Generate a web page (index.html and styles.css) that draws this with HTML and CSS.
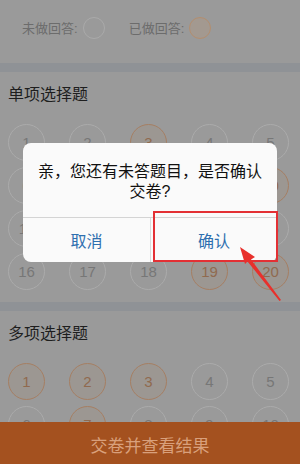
FILE: index.html
```html
<!DOCTYPE html>
<html lang="zh-CN">
<head>
<meta charset="utf-8">
<link rel="stylesheet" href="styles.css">
</head>
<body>
<div class="page">
  <div class="legend">
    <span class="legend-item">未做回答:<span class="dot"></span></span>
    <span class="legend-item">已做回答:<span class="dot done"></span></span>
  </div>
  <div class="band"></div>
  <section class="section">
    <h2 class="title">单项选择题</h2>
    <div class="grid">
      <span class="num">1</span><span class="num">2</span><span class="num done">3</span><span class="num">4</span><span class="num">5</span>
      <span class="num">6</span><span class="num">7</span><span class="num">8</span><span class="num">9</span><span class="num done">10</span>
      <span class="num">11</span><span class="num">12</span><span class="num">13</span><span class="num">14</span><span class="num">15</span>
      <span class="num">16</span><span class="num">17</span><span class="num">18</span><span class="num done">19</span><span class="num done">20</span>
    </div>
  </section>
  <div class="band"></div>
  <section class="section">
    <h2 class="title">多项选择题</h2>
    <div class="grid">
      <span class="num done">1</span><span class="num done">2</span><span class="num done">3</span><span class="num">4</span><span class="num">5</span>
      <span class="num">6</span><span class="num done">7</span><span class="num">8</span><span class="num">9</span><span class="num">10</span>
    </div>
  </section>
  <div class="submit">交卷并查看结果</div>

  <div class="dialog">
    <p class="msg">亲，您还有未答题目，是否确认交卷?</p>
    <div class="actions">
      <span class="btn">取消</span>
      <span class="btn">确认</span>
    </div>
  </div>
  <div class="highlight"></div>
  <svg class="arrow" width="300" height="464" viewBox="0 0 300 464">
    <polygon points="240,247 255,257 251,259.5 281,300 279.5,301 247.5,261.5 245,264" fill="#e8302c"/>
  </svg>
</div>
</body>
</html>
```
FILE: styles.css
```css
html, body {
  margin: 0;
  padding: 0;
}
body {
  width: 300px;
  height: 464px;
  overflow: hidden;
  background: #9a9a9a;
  font-family: "Liberation Sans", "Noto Sans CJK SC", sans-serif;
}
.page {
  position: relative;
  width: 300px;
  height: 464px;
  overflow: hidden;
  background: #9a9a9a;
}
.legend {
  height: 63px;
  display: flex;
  align-items: center;
  padding-left: 22px;
  gap: 24px;
  font-size: 13px;
  color: #6c6c6c;
  box-sizing: border-box;
  padding-bottom: 8px;
}
.legend-item {
  display: flex;
  align-items: center;
  gap: 5px;
}
.dot {
  width: 22px;
  height: 22px;
  box-sizing: border-box;
  border: 1px solid #aaaaaa;
  border-radius: 50%;
}
.dot.done {
  border-color: #b38e6f;
  background: #a39990;
}
.band {
  height: 9px;
  background: #8f9296;
}
.section {
  padding: 0 0 0 8px;
}
.title {
  margin: 0;
  height: 44px;
  line-height: 46px;
  font-size: 16px;
  font-weight: normal;
  color: #1e1e1e;
}
.grid {
  display: grid;
  grid-template-columns: repeat(5, 37px);
  column-gap: 24px;
  row-gap: 6px;
  padding: 8px 0 12px;
}
.num {
  width: 37px;
  height: 37px;
  box-sizing: border-box;
  border: 1px solid #ababab;
  border-radius: 50%;
  display: flex;
  align-items: center;
  justify-content: center;
  font-size: 15px;
  color: #777;
}
.num.done {
  border-color: #a67f63;
  color: #906a4f;
  background: #9c9792;
}
.submit {
  position: absolute;
  left: 0;
  right: 0;
  bottom: 0;
  height: 42px;
  background: #a4511f;
  color: #d9a07c;
  font-size: 17px;
  display: flex;
  align-items: center;
  justify-content: center;
  padding-top: 3px;
  box-sizing: border-box;
}
.dialog {
  position: absolute;
  left: 23px;
  top: 143px;
  width: 254px;
  height: 119px;
  background: #fafafa;
  border-radius: 8px;
  display: flex;
  flex-direction: column;
  overflow: hidden;
}
.msg {
  margin: 0;
  height: 75px;
  box-sizing: border-box;
  padding: 19px 14px 0;
  font-size: 16px;
  line-height: 20px;
  text-align: center;
  color: #111;
  border-bottom: 1px solid #d4d4d4;
}
.actions {
  flex: 1;
  display: grid;
  grid-template-columns: 1fr 1fr;
}
.btn {
  display: flex;
  align-items: center;
  justify-content: center;
  font-size: 16px;
  color: #2e6faf;
}
.btn + .btn {
  border-left: 1px solid #dcdcdc;
}
.highlight {
  position: absolute;
  left: 153px;
  top: 211px;
  width: 125px;
  height: 51px;
  box-sizing: border-box;
  border: 2px solid #e33034;
}
.arrow {
  position: absolute;
  left: 0;
  top: 0;
}
```
